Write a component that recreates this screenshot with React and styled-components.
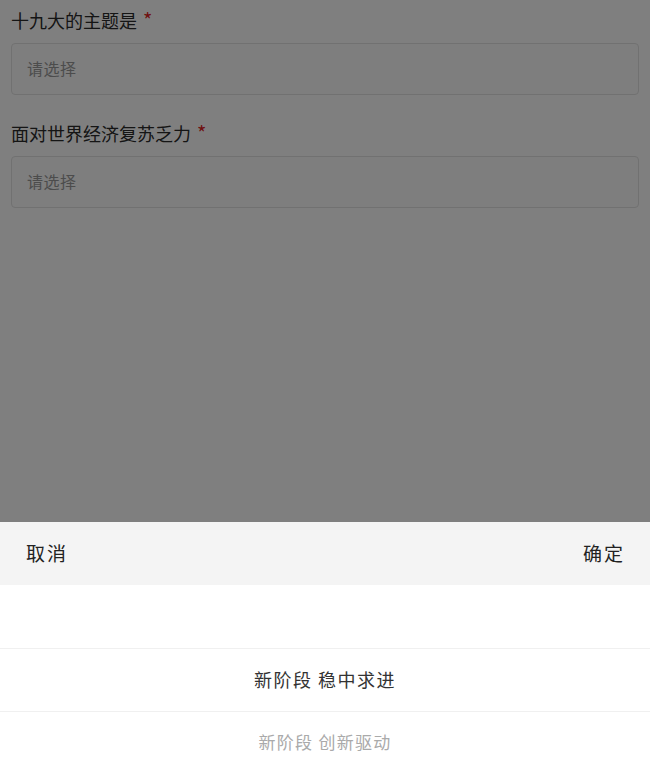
import React, { useState } from "react";
import styled, { createGlobalStyle } from "styled-components";

const GlobalStyle = createGlobalStyle`
    html, body {
        margin: 0;
        padding: 0;
        background: #fff;
    }
    body {
        font-family: "Noto Sans CJK SC", "Noto Sans", "Liberation Sans", sans-serif;
    }
`;

const questions = [
    { id: "theme", label: "十九大的主题是" },
    { id: "economy", label: "面对世界经济复苏乏力" },
];

const options = ["", "新阶段 稳中求进", "新阶段 创新驱动"];

const Page = styled.div`
    height: 780px;
    padding: 8px 11px 0;
    box-sizing: border-box;
    background: #fff;
`;

const Field = styled.div`
    margin-bottom: 26px;
`;

const Label = styled.div`
    font-size: 18px;
    line-height: 24px;
    color: #2a2a2a;
    margin-bottom: 11px;

    span {
        color: #e02222;
        font-size: 20px;
        margin-left: 6px;
    }
`;

const SelectBox = styled.div`
    height: 52px;
    box-sizing: border-box;
    border: 1px solid #e2e2e2;
    border-radius: 4px;
    background: #fcfcfc;
    display: flex;
    align-items: center;
    padding: 0 15px 2px;
    font-size: 16px;
    letter-spacing: 0.5px;
    color: #999;
`;

const Mask = styled.div`
    position: fixed;
    inset: 0;
    background: rgba(0, 0, 0, 0.5);
`;

const Sheet = styled.div`
    position: fixed;
    left: 0;
    right: 0;
    bottom: 0;
    height: 258px;
    overflow: hidden;
    background: #fff;
`;

const SheetHeader = styled.div`
    height: 63px;
    background: #f4f4f4;
    display: flex;
    align-items: center;
    justify-content: space-between;
    padding: 0 25px 2px 26px;
    box-sizing: border-box;
`;

const HeaderButton = styled.button`
    border: none;
    background: none;
    padding: 0;
    font-family: inherit;
    font-size: 19px;
    letter-spacing: 2px;
    color: #222;
    cursor: pointer;
`;

const OptionRow = styled.div`
    height: 63px;
    box-sizing: border-box;
    display: flex;
    align-items: center;
    justify-content: center;
    padding-bottom: 3px;
    border-top: ${(p) => (p.$first ? "none" : "1px solid #f0f0f0")};
    font-size: ${(p) => (p.$active ? "18px" : "17px")};
    letter-spacing: ${(p) => (p.$active ? "1.5px" : "1.3px")};
    color: ${(p) => (p.$active ? "#333" : "#aaa")};
`;

export default function App() {
    const [selected] = useState(1);

    return (
        <>
            <GlobalStyle />
            <Page>
                {questions.map((q) => (
                    <Field key={q.id}>
                        <Label>
                            {q.label}
                            <span>*</span>
                        </Label>
                        <SelectBox>请选择</SelectBox>
                    </Field>
                ))}
            </Page>
            <Mask />
            <Sheet>
                <SheetHeader>
                    <HeaderButton>取消</HeaderButton>
                    <HeaderButton>确定</HeaderButton>
                </SheetHeader>
                {options.map((opt, i) => (
                    <OptionRow key={i} $first={i === 0} $active={i === selected}>
                        {opt}
                    </OptionRow>
                ))}
            </Sheet>
        </>
    );
}
